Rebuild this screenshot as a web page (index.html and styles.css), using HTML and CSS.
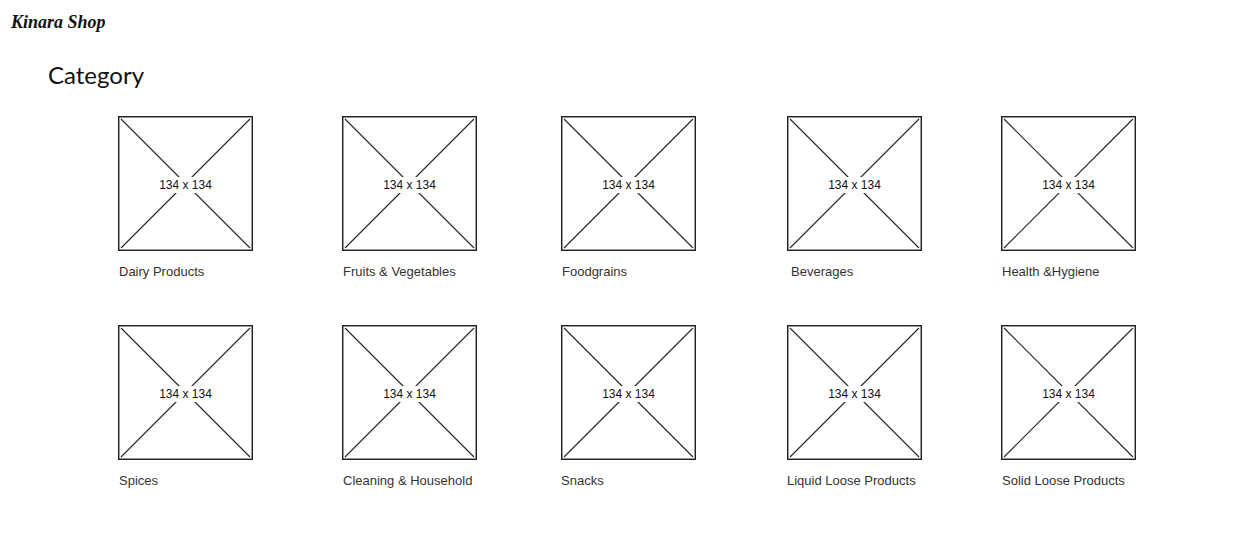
FILE: index.html
```html
<!DOCTYPE html>

<html>

<head>
    <title>Kinara Shop</title>
    <meta charset="utf-8">

    <link rel="stylesheet" href="styles.css">
</head>

<body>
    <header class="brand">Kinara Shop</header>

    <h1 class="title">Category</h1>

    <div class="grid">
        <div class="item">
            <div class="thumb">
                <svg viewBox="0 0 135 135" width="135" height="135">
                    <rect x="0.7" y="0.7" width="133.6" height="133.6" />
                    <line x1="3" y1="3" x2="132" y2="132" />
                    <line x1="132" y1="3" x2="3" y2="132" />
                </svg>
                <span class="size">134 x 134</span>
            </div>
            <p class="label">Dairy Products</p>
        </div>
        <div class="item">
            <div class="thumb">
                <svg viewBox="0 0 135 135" width="135" height="135">
                    <rect x="0.7" y="0.7" width="133.6" height="133.6" />
                    <line x1="3" y1="3" x2="132" y2="132" />
                    <line x1="132" y1="3" x2="3" y2="132" />
                </svg>
                <span class="size">134 x 134</span>
            </div>
            <p class="label">Fruits &amp; Vegetables</p>
        </div>
        <div class="item">
            <div class="thumb">
                <svg viewBox="0 0 135 135" width="135" height="135">
                    <rect x="0.7" y="0.7" width="133.6" height="133.6" />
                    <line x1="3" y1="3" x2="132" y2="132" />
                    <line x1="132" y1="3" x2="3" y2="132" />
                </svg>
                <span class="size">134 x 134</span>
            </div>
            <p class="label">Foodgrains</p>
        </div>
        <div class="item">
            <div class="thumb">
                <svg viewBox="0 0 135 135" width="135" height="135">
                    <rect x="0.7" y="0.7" width="133.6" height="133.6" />
                    <line x1="3" y1="3" x2="132" y2="132" />
                    <line x1="132" y1="3" x2="3" y2="132" />
                </svg>
                <span class="size">134 x 134</span>
            </div>
            <p class="label shift">Beverages</p>
        </div>
        <div class="item">
            <div class="thumb">
                <svg viewBox="0 0 135 135" width="135" height="135">
                    <rect x="0.7" y="0.7" width="133.6" height="133.6" />
                    <line x1="3" y1="3" x2="132" y2="132" />
                    <line x1="132" y1="3" x2="3" y2="132" />
                </svg>
                <span class="size">134 x 134</span>
            </div>
            <p class="label">Health &amp;Hygiene</p>
        </div>

        <div class="item">
            <div class="thumb">
                <svg viewBox="0 0 135 135" width="135" height="135">
                    <rect x="0.7" y="0.7" width="133.6" height="133.6" />
                    <line x1="3" y1="3" x2="132" y2="132" />
                    <line x1="132" y1="3" x2="3" y2="132" />
                </svg>
                <span class="size">134 x 134</span>
            </div>
            <p class="label">Spices</p>
        </div>
        <div class="item">
            <div class="thumb">
                <svg viewBox="0 0 135 135" width="135" height="135">
                    <rect x="0.7" y="0.7" width="133.6" height="133.6" />
                    <line x1="3" y1="3" x2="132" y2="132" />
                    <line x1="132" y1="3" x2="3" y2="132" />
                </svg>
                <span class="size">134 x 134</span>
            </div>
            <p class="label">Cleaning &amp; Household</p>
        </div>
        <div class="item">
            <div class="thumb">
                <svg viewBox="0 0 135 135" width="135" height="135">
                    <rect x="0.7" y="0.7" width="133.6" height="133.6" />
                    <line x1="3" y1="3" x2="132" y2="132" />
                    <line x1="132" y1="3" x2="3" y2="132" />
                </svg>
                <span class="size">134 x 134</span>
            </div>
            <p class="label flush">Snacks</p>
        </div>
        <div class="item">
            <div class="thumb">
                <svg viewBox="0 0 135 135" width="135" height="135">
                    <rect x="0.7" y="0.7" width="133.6" height="133.6" />
                    <line x1="3" y1="3" x2="132" y2="132" />
                    <line x1="132" y1="3" x2="3" y2="132" />
                </svg>
                <span class="size">134 x 134</span>
            </div>
            <p class="label flush">Liquid Loose Products</p>
        </div>
        <div class="item">
            <div class="thumb">
                <svg viewBox="0 0 135 135" width="135" height="135">
                    <rect x="0.7" y="0.7" width="133.6" height="133.6" />
                    <line x1="3" y1="3" x2="132" y2="132" />
                    <line x1="132" y1="3" x2="3" y2="132" />
                </svg>
                <span class="size">134 x 134</span>
            </div>
            <p class="label">Solid Loose Products</p>
        </div>
    </div>
</body>

</html>
```

FILE: styles.css
```css
body {
    margin: 0;
    padding: 0;
    background: #fff;
    color: #222;
}

.brand {
    padding: 12px 11px 0;
    font: italic bold 18px/20px "Liberation Serif", serif;
    color: #111;
}

.title {
    margin: 29px 0 0;
    padding-left: 48px;
    font: normal 24px/28px Lato, sans-serif;
    color: #111;
}

.grid {
    display: grid;
    grid-template-columns: 224px 219px 226px 214px 135px;
    row-gap: 45px;
    margin: 27px 0 0 118px;
}

.thumb {
    display: flex;
    align-items: center;
    justify-content: center;
    width: 135px;
    height: 135px;
    position: relative;
}

.thumb svg {
    position: absolute;
    top: 0;
    left: 0;
}

.thumb rect {
    fill: #fff;
    stroke: #222;
    stroke-width: 1.5;
}

.thumb line {
    stroke: #222;
    stroke-width: 1.1;
}

/* white patch behind the size caption */
.size {
    position: relative;
    top: 1px;
    padding: 1px 2px;
    background: #fff;
    font: 12px/14px "Liberation Sans", Arial, sans-serif;
    color: #111;
}

.label {
    margin: 12px 0 0;
    padding-left: 1px;
    font: 13px/17px "Liberation Sans", Arial, sans-serif;
    color: #333;
}

.label.shift {
    padding-left: 4px;
}

.label.flush {
    padding-left: 0;
}
```
